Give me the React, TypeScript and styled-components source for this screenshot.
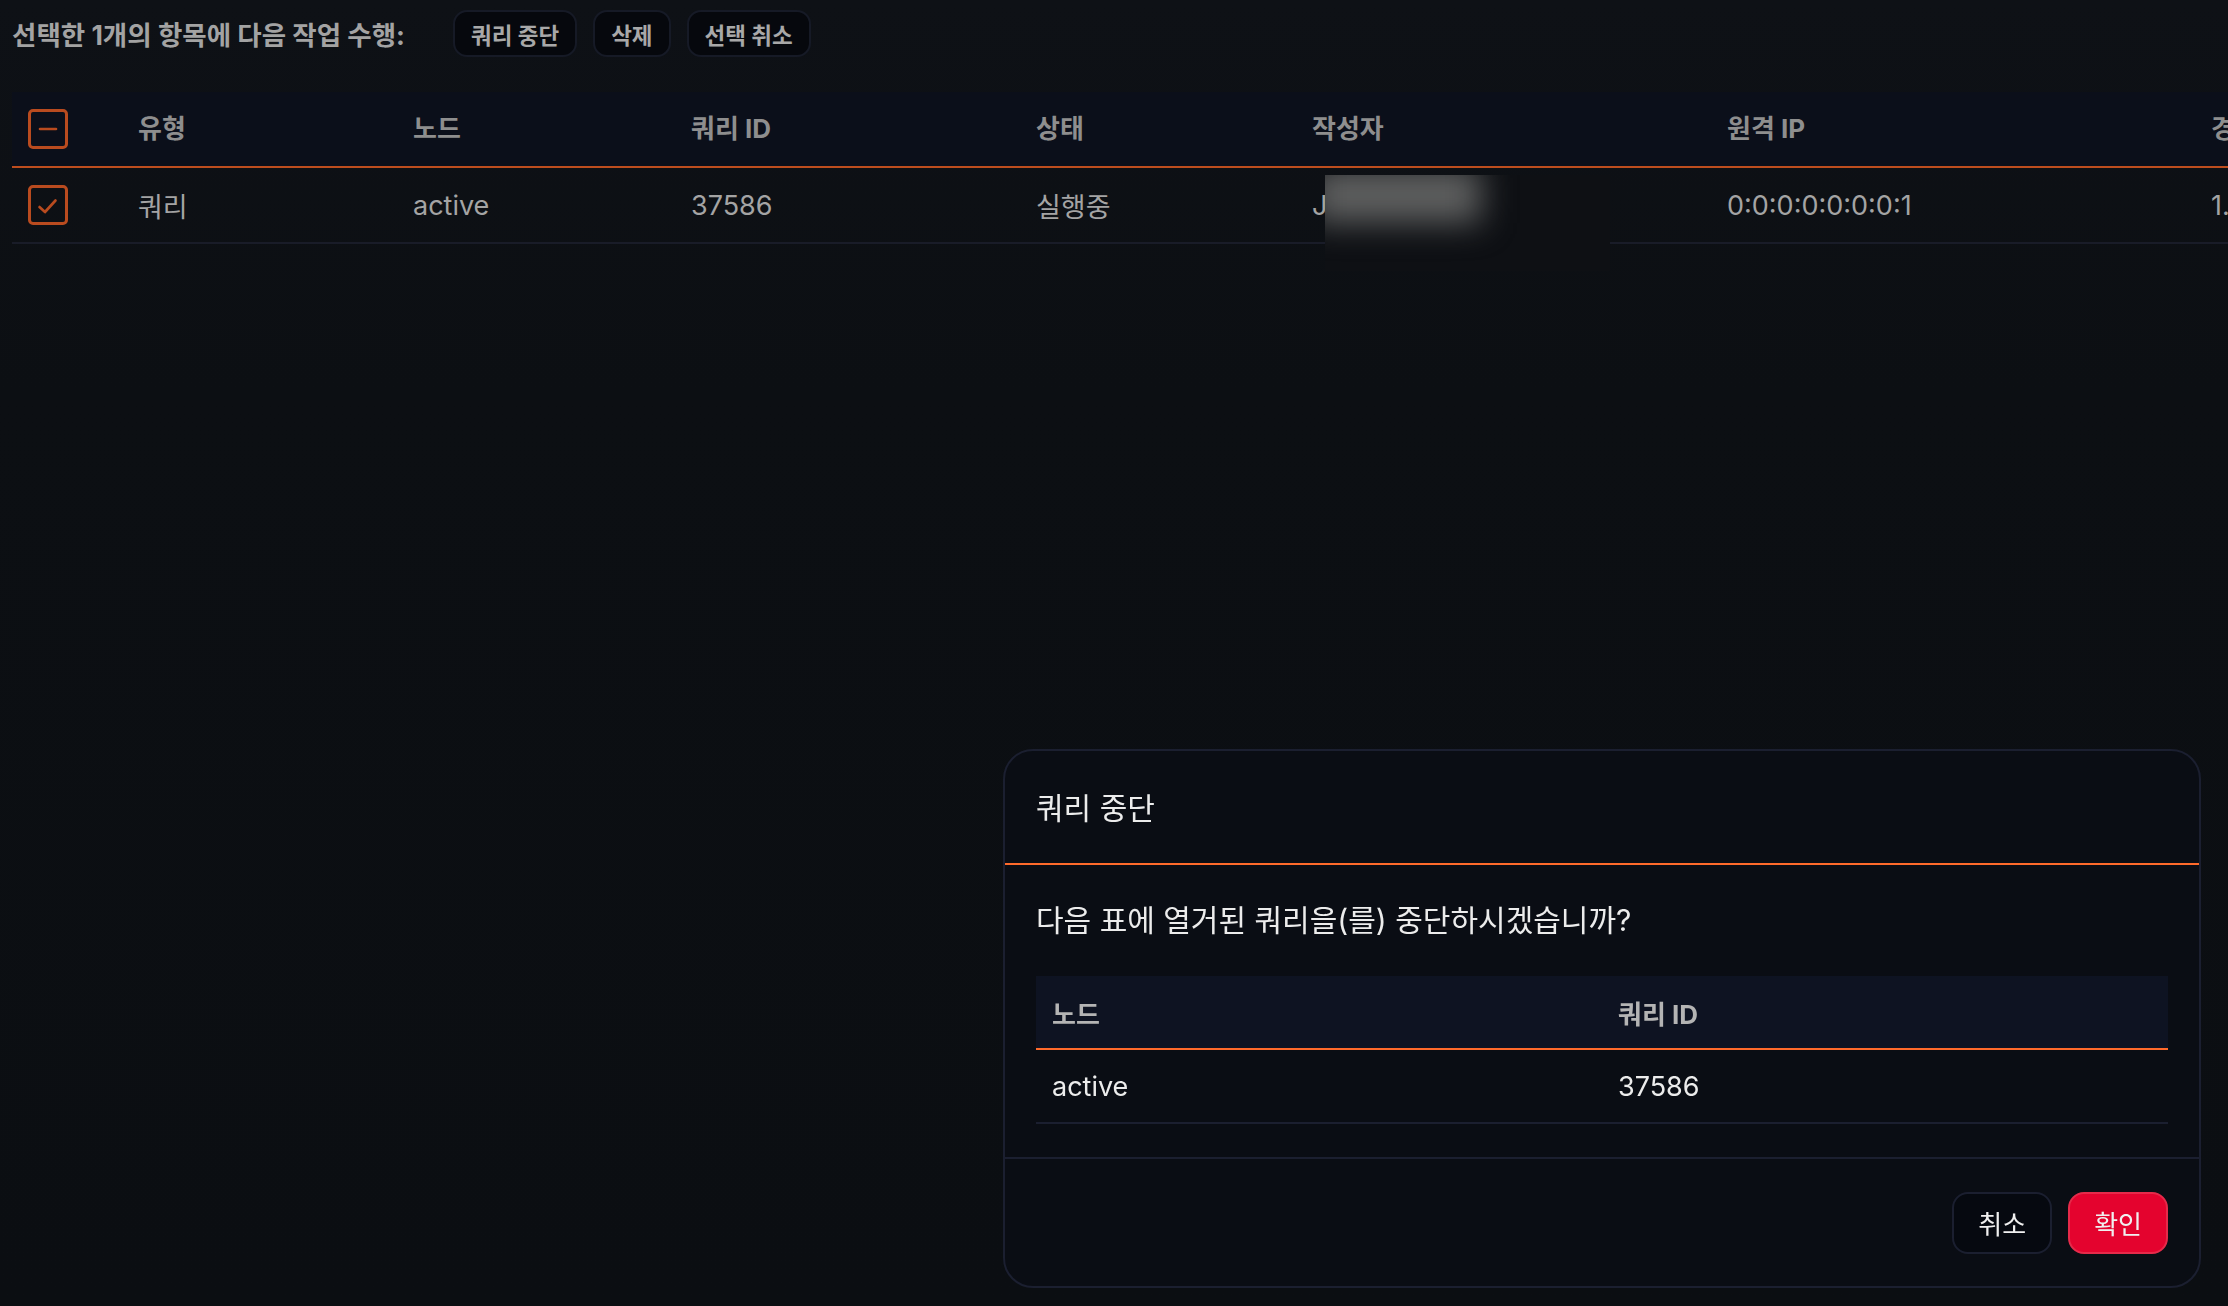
import React from "react";
import styled, { createGlobalStyle } from "styled-components";

const FONT = `Inter, "Noto Sans CJK KR", "Noto Sans", sans-serif`;

const GlobalStyle = createGlobalStyle`
  html, body {
    margin: 0;
    padding: 0;
    background: #0c0f13;
    overflow: hidden;
  }
  body {
    width: 2228px;
    height: 1306px;
    font-family: ${FONT};
  }
  * { box-sizing: border-box; }
`;

const Page = styled.div`
  position: relative;
  width: 2228px;
  height: 1306px;
  padding: 10px 0 0 12px;
  background: linear-gradient(180deg, #0e1116 0%, #0c0f13 30%, #0b0e12 100%);
  overflow: hidden;
`;

const TopBar = styled.div`
  display: flex;
  align-items: center;
  height: 47px;
`;

const SelectionText = styled.span`
  font-size: 26.5px;
  font-weight: 700;
  color: #a3a3a3;
  margin-right: 48px;
  white-space: nowrap;
`;

const ActionGroup = styled.div`
  display: flex;
  gap: 16px;
`;

const ActionButton = styled.button`
  height: 47px;
  padding: 0 16px;
  border-radius: 14px;
  background: #06080d;
  border: 2px solid #161a26;
  color: #a8a8a8;
  font-family: ${FONT};
  font-size: 22.5px;
  font-weight: 700;
  white-space: nowrap;
`;

const TableWrap = styled.div`
  margin-top: 35px;
  width: 2600px;
`;

const DataTable = styled.table`
  border-collapse: collapse;
  table-layout: fixed;
  width: 2483px;
`;

const Col = styled.col<{ $w: number }>`
  width: ${(p) => p.$w}px;
`;

const HeadCell = styled.th`
  height: 75px;
  padding: 0 0 5px 16px;
  background: #0b0f1a;
  border-bottom: 2px solid #bd4d1e;
  text-align: left;
  vertical-align: middle;
  font-size: 26px;
  font-weight: 700;
  color: #8e8e8e;
  white-space: nowrap;
  overflow: hidden;
`;

const BodyCell = styled.td`
  position: relative;
  height: 76px;
  padding: 0 0 0 16px;
  border-bottom: 2px solid #191c28;
  vertical-align: middle;
  font-size: 27px;
  font-weight: 400;
  color: #a4a4a4;
  white-space: nowrap;
`;

const CheckBox = styled.span<{ $shift?: number }>`
  display: flex;
  align-items: center;
  justify-content: center;
  width: 40px;
  height: 40px;
  margin-top: ${(p) => p.$shift ?? 0}px;
  border: 3px solid #b94b1f;
  border-radius: 5px;
`;

const BlurMask = styled.span`
  position: absolute;
  left: 29px;
  top: 7px;
  width: 285px;
  height: 96px;
  background: #0e1014;
  overflow: hidden;
`;

const Smudge = styled.span`
  position: absolute;
  left: -14px;
  top: -8px;
  width: 170px;
  height: 56px;
  background: #5e5f5f;
  filter: blur(16px);
`;

const Dialog = styled.div`
  position: fixed;
  right: 27px;
  bottom: 18px;
  width: 1198px;
  height: 539px;
  background: #0a0d14;
  border: 2px solid #1b1f30;
  border-radius: 30px;
  display: flex;
  flex-direction: column;
  overflow: hidden;
`;

const DialogHeader = styled.div`
  height: 114px;
  padding: 0 31px 3px;
  display: flex;
  align-items: center;
  border-bottom: 2px solid #ff6a2b;
  font-size: 30px;
  font-weight: 400;
  color: #ececec;
`;

const DialogBody = styled.div`
  flex: 1;
  padding: 35px 31px 0;
`;

const Message = styled.p`
  margin: 0 0 36px;
  font-size: 30px;
  line-height: 40px;
  color: #ececec;
`;

const ModalTable = styled.table`
  width: 100%;
  border-collapse: collapse;
  table-layout: fixed;
`;

const ModalHead = styled.th`
  height: 73px;
  padding: 0 0 0 16px;
  background: #0e1322;
  border-bottom: 2px solid #ff6a2b;
  text-align: left;
  font-size: 26px;
  font-weight: 700;
  color: #b4b4b4;
`;

const ModalCell = styled.td`
  height: 74px;
  padding: 0 0 0 16px;
  border-bottom: 2px solid #1b1f30;
  font-size: 27px;
  color: #ececec;
`;

const DialogFooter = styled.div`
  height: 129px;
  padding: 0 31px;
  border-top: 2px solid #1b1f30;
  display: flex;
  align-items: center;
  justify-content: flex-end;
  gap: 16px;
`;

const FooterButton = styled.button<{ $primary?: boolean }>`
  height: 62px;
  padding: 0 24px;
  border-radius: 16px;
  font-family: ${FONT};
  font-size: 26px;
  font-weight: 400;
  color: #f0f0f0;
  background: ${(p) => (p.$primary ? "#e4032e" : "#060910")};
  border: 2px solid ${(p) => (p.$primary ? "#e62a4a" : "#1b1f30")};
`;

const columns = [
  { w: 110, label: "" },
  { w: 275, label: "유형" },
  { w: 278, label: "노드" },
  { w: 345, label: "쿼리 ID" },
  { w: 276, label: "상태" },
  { w: 415, label: "작성자" },
  { w: 484, label: "원격 IP" },
  { w: 300, label: "경과 시간" },
];

const Indeterminate = () => (
  <svg width="34" height="34" viewBox="0 0 34 34">
    <line x1="9" y1="17" x2="25" y2="17" stroke="#b94b1f" strokeWidth="2.6" strokeLinecap="round" />
  </svg>
);

const Check = () => (
  <svg width="34" height="34" viewBox="0 0 34 34">
    <polyline
      points="8.5,19 14,24 24.5,12.5"
      fill="none"
      stroke="#b94b1f"
      strokeWidth="2.6"
      strokeLinecap="round"
      strokeLinejoin="round"
    />
  </svg>
);

export default function App() {
  return (
    <>
      <GlobalStyle />
      <Page>
        <TopBar>
          <SelectionText>선택한 1개의 항목에 다음 작업 수행:</SelectionText>
          <ActionGroup>
            <ActionButton>쿼리 중단</ActionButton>
            <ActionButton>삭제</ActionButton>
            <ActionButton>선택 취소</ActionButton>
          </ActionGroup>
        </TopBar>

        <TableWrap>
          <DataTable>
            <colgroup>
              {columns.map((c, i) => (
                <Col key={i} $w={c.w} />
              ))}
            </colgroup>
            <thead>
              <tr>
                <HeadCell>
                  <CheckBox $shift={4}>
                    <Indeterminate />
                  </CheckBox>
                </HeadCell>
                {columns.slice(1).map((c) => (
                  <HeadCell key={c.label}>{c.label}</HeadCell>
                ))}
              </tr>
            </thead>
            <tbody>
              <tr>
                <BodyCell>
                  <CheckBox>
                    <Check />
                  </CheckBox>
                </BodyCell>
                <BodyCell>쿼리</BodyCell>
                <BodyCell>active</BodyCell>
                <BodyCell>37586</BodyCell>
                <BodyCell>실행중</BodyCell>
                <BodyCell>
                  J
                  <BlurMask>
                    <Smudge />
                  </BlurMask>
                </BodyCell>
                <BodyCell>0:0:0:0:0:0:0:1</BodyCell>
                <BodyCell>1.24s</BodyCell>
              </tr>
            </tbody>
          </DataTable>
        </TableWrap>

        <Dialog role="dialog">
          <DialogHeader>쿼리 중단</DialogHeader>
          <DialogBody>
            <Message>다음 표에 열거된 쿼리을(를) 중단하시겠습니까?</Message>
            <ModalTable>
              <thead>
                <tr>
                  <ModalHead>노드</ModalHead>
                  <ModalHead>쿼리 ID</ModalHead>
                </tr>
              </thead>
              <tbody>
                <tr>
                  <ModalCell>active</ModalCell>
                  <ModalCell>37586</ModalCell>
                </tr>
              </tbody>
            </ModalTable>
          </DialogBody>
          <DialogFooter>
            <FooterButton>취소</FooterButton>
            <FooterButton $primary>확인</FooterButton>
          </DialogFooter>
        </Dialog>
      </Page>
    </>
  );
}
